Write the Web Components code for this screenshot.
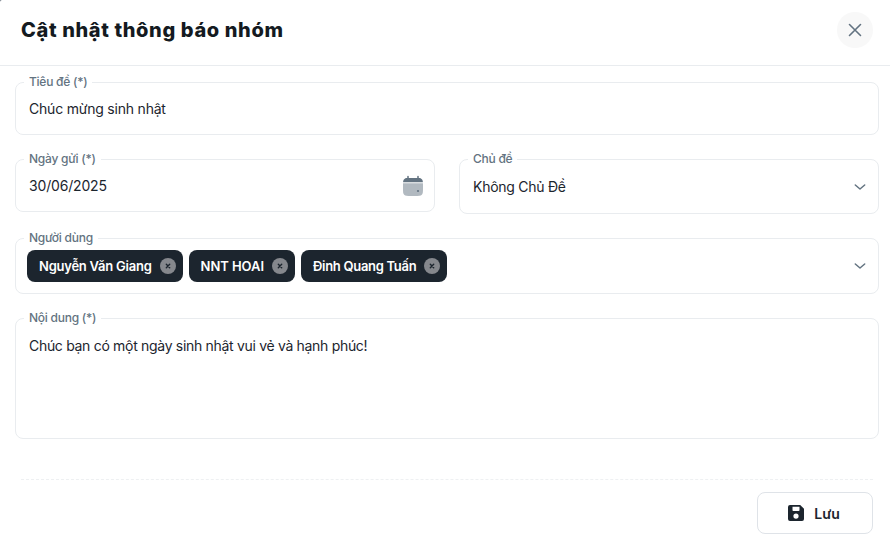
<!DOCTYPE html>
<html><head><meta charset="utf-8"><style>
html,body{margin:0;padding:0;background:#fff}
body{font-family:Inter,"Liberation Sans",sans-serif;color:#1c252e;background:#5a6672}
</style></head><body>
<app-dialog>
  <span slot="title">Cật nhật thông báo nhóm</span>
  <form-field label="Tiêu đề (*)" h="53" style="grid-column:1/3;letter-spacing:-.21px">Chúc mừng sinh nhật</form-field>
  <form-field label="Ngày gửi (*)" h="53" end="9" style="align-self:start;letter-spacing:-.17px">30/06/2025<cal-icon slot="end"></cal-icon></form-field>
  <form-field label="Chủ đề" h="55">Không Chủ Đề<chev-icon slot="end"></chev-icon></form-field>
  <form-field label="Người dùng" h="56" pad="11" style="grid-column:1/3">
    <div style="display:flex;gap:6px">
      <user-chip>Nguyễn Văn Giang</user-chip><user-chip style="letter-spacing:-.05px">NNT HOAI</user-chip><user-chip style="letter-spacing:-.3px">Đinh Quang Tuấn</user-chip>
    </div>
    <chev-icon slot="end"></chev-icon>
  </form-field>
  <form-field label="Nội dung (*)" h="121" top="18" style="grid-column:1/3;letter-spacing:-.31px">Chúc bạn có một ngày sinh nhật vui vẻ và hạnh phúc!</form-field>
</app-dialog>
<script>
const def=(n,html,init)=>customElements.define(n,class extends HTMLElement{
  connectedCallback(){ if(this.shadowRoot)return; const r=this.attachShadow({mode:'open'}); r.innerHTML=html; init&&init(this,r);}
});
def('cal-icon',`<style>:host{display:block;width:24px;height:24px}svg{display:block}</style>
<svg width="24" height="24" viewBox="0 0 24 24"><path fill="#637381" opacity=".5" d="M2 12c0-1 0-1.900.03-2.700h19.940C22 10.100 22 11 22 12v2c0 3.800 0 5.700-1.170 6.830C19.660 22 17.770 22 14 22h-4c-3.770 0-5.660 0-6.830-1.170C2 19.660 2 17.770 2 14z"/><path fill="#637381" d="M7.750 2.500a.75.75 0 0 0-1.500 0v1.580c-1.440.12-2.380.4-3.080 1.090C2.480 5.860 2.200 6.800 2.080 8.250h19.840c-.12-1.450-.4-2.390-1.090-3.080-.7-.69-1.640-.97-3.080-1.090V2.500a.75.750 0 0 0-1.500 0v1.510C15.580 4 14.870 4 14 4h-4c-.87 0-1.580 0-2.250.01z"/><circle cx="17" cy="17" r="1.100" fill="#637381"/></svg>`);
def('chev-icon',`<style>:host{display:block;width:20px;height:20px}svg{display:block}</style>
<svg width="20" height="20" viewBox="0 0 20 20" fill="none"><path d="M5.300 8l4.700 4 4.700-4" stroke="#637381" stroke-width="1.500" stroke-linecap="round" stroke-linejoin="round"/></svg>`);
def('user-chip',`<style>
:host{display:flex;align-items:center;height:32px;box-sizing:border-box;padding:0 6px 0 12px;gap:7px;border-radius:8px;background:#1c252e;color:#fff;font-size:13px;font-weight:600;letter-spacing:-.24px;white-space:nowrap}
svg{display:block}
</style><slot></slot>
<svg width="18" height="18" viewBox="0 0 18 18"><circle cx="9" cy="9" r="8" fill="#85888d"/><path d="M7.300 7.300l3.400 3.400M10.700 7.300l-3.400 3.400" stroke="#1c252e" stroke-width="1.400" stroke-linecap="round"/></svg>`);
def('form-field',`<style>
:host{display:block;position:relative;box-sizing:border-box;border:1px solid #e9ecef;border-radius:8px;font-size:14px;letter-spacing:-.27px;color:#1c252e}
.row{display:flex;align-items:center;height:100%;box-sizing:border-box;padding:0 8px 0 13px}
.main{flex:1;min-width:0}
.lab{position:absolute;left:8px;top:-9px;padding:0 5px;background:#fff;font-size:12px;line-height:16px;font-weight:500;letter-spacing:-.25px;color:#637381}
:host([top]) .row{align-items:flex-start}
</style>
<span class="lab"></span><div class="row"><div class="main"><slot></slot></div><slot name="end"></slot></div>`,(el,r)=>{
  r.querySelector('.lab').textContent=el.getAttribute('label');
  el.style.height=el.getAttribute('h')+'px';
  const row=r.querySelector('.row');
  if(el.hasAttribute('pad')) row.style.paddingLeft=el.getAttribute('pad')+'px';
  if(el.hasAttribute('end')) row.style.paddingRight=el.getAttribute('end')+'px';
  if(el.hasAttribute('top')) row.style.paddingTop=el.getAttribute('top')+'px';
});
def('app-dialog',`<style>
:host{display:flex;flex-direction:column;width:890px;height:546px;box-sizing:border-box;overflow:hidden;background:#fff;border-top-left-radius:2px}
header{display:flex;align-items:center;justify-content:space-between;height:66px;flex:none;box-sizing:border-box;border-bottom:1px solid #e9ecef;padding:0 17px 6px 21px}
h1{margin:0;font-size:20px;line-height:28px;font-weight:800;letter-spacing:.62px;color:#141a21}
.close{width:36px;height:36px;border-radius:50%;background:#f8f8f8;display:flex;align-items:center;justify-content:center}
.grid{display:grid;grid-template-columns:420px 420px;column-gap:24px;row-gap:24px;padding:16px 11px 0 15px;grid-template-rows:53px 55px 56px 121px}
.dash{margin:40px 17px 0 21px;border-top:1px dashed #eef0f2}
footer{display:flex;justify-content:flex-end;padding:12px 17px 0 0}
.btn{width:116px;height:42px;box-sizing:border-box;border:1px solid #dfe3e8;border-radius:8px;padding-right:4px;display:flex;align-items:center;justify-content:center;gap:8px;font-size:14px;font-weight:600;color:#1c252e}
svg{display:block}
</style>
<header><h1><slot name="title"></slot></h1>
<div class="close"><svg width="20" height="20" viewBox="0 0 20 20" fill="none"><path d="M4.500 4.500l11 11M15.500 4.500l-11 11" stroke="#637381" stroke-width="1.600" stroke-linecap="round"/></svg></div></header>
<div class="grid"><slot></slot></div>
<div class="dash"></div>
<footer><div class="btn"><svg width="20" height="20" viewBox="0 0 20 20"><path fill="#1c252e" fill-rule="evenodd" d="M4 2h10.200L18 5.800V16a2 2 0 0 1-2 2H4a2 2 0 0 1-2-2V4a2 2 0 0 1 2-2zm2.500 1.800v3.400c0 .5.300.8.800.8h5.400c.5 0 .8-.3.800-.8V3.800zM10 10.500a2.600 2.600 0 1 0 0 5.200 2.600 2.600 0 0 0 0-5.200z"/></svg><span>Lưu</span></div></footer>`);
</script>
</body></html>
